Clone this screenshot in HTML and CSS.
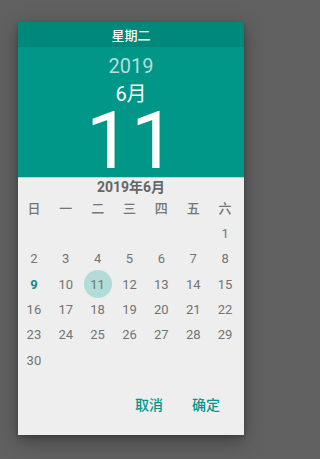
FILE: index.html
```html
<!DOCTYPE html>
<html lang="zh">
<head>
<meta charset="utf-8">
<link rel="stylesheet" href="styles.css">
</head>
<body>
<div class="dialog">
  <div class="weekday-bar">星期二</div>
  <div class="header">
    <div class="year">2019</div>
    <div class="month">6月</div>
    <div class="day">11</div>
  </div>
  <div class="calendar">
    <div class="month-title">2019年6月</div>
    <div class="weekdays">
      <span>日</span><span>一</span><span>二</span><span>三</span><span>四</span><span>五</span><span>六</span>
    </div>
    <div class="days">
      <span></span><span></span><span></span><span></span><span></span><span></span><span>1</span>
      <span>2</span><span>3</span><span>4</span><span>5</span><span>6</span><span>7</span><span>8</span>
      <span class="today">9</span><span>10</span><span class="selected"><b>11</b></span><span>12</span><span>13</span><span>14</span><span>15</span>
      <span>16</span><span>17</span><span>18</span><span>19</span><span>20</span><span>21</span><span>22</span>
      <span>23</span><span>24</span><span>25</span><span>26</span><span>27</span><span>28</span><span>29</span>
      <span>30</span>
    </div>
    <div class="actions">
      <span class="btn">取消</span>
      <span class="btn">确定</span>
    </div>
  </div>
</div>
</body>
</html>
```
FILE: styles.css
```css
html, body {
  margin: 0;
  padding: 0;
  background: #616161;
  font-family: Roboto, "Noto Sans CJK SC", sans-serif;
}
body {
  width: 262px;
  height: 459px;
  overflow: hidden;
}
.dialog {
  margin: 22px 0 0 18px;
  width: 226px;
  height: 413px;
  background: #eeeeee;
  box-shadow: 0 6px 18px rgba(0, 0, 0, 0.35), 0 2px 4px rgba(0, 0, 0, 0.2);
  display: flex;
  flex-direction: column;
}
.weekday-bar {
  height: 25px;
  background: #00897b;
  color: #ffffff;
  font-size: 13px;
  font-weight: 500;
  line-height: 27px;
  text-align: center;
}
.header {
  background: #009688;
  height: 130px;
  border-bottom: 1px solid #a9d7d2;
  display: flex;
  flex-direction: column;
  align-items: center;
}
.year {
  margin-top: 9px;
  height: 21px;
  line-height: 21px;
  font-size: 20px;
  color: #b2dfdb;
}
.month {
  margin-top: 6px;
  height: 22px;
  line-height: 22px;
  font-size: 20px;
  font-weight: 400;
  color: #ffffff;
}
.day {
  margin-top: 4px;
  height: 64px;
  line-height: 64px;
  font-size: 80px;
  font-weight: 400;
  color: #ffffff;
}
.calendar {
  flex: 1;
  display: flex;
  flex-direction: column;
}
.month-title {
  height: 19px;
  line-height: 19px;
  text-align: center;
  font-size: 14px;
  font-weight: 700;
  color: #666666;
}
.weekdays {
  display: grid;
  grid-template-columns: repeat(7, 1fr);
  padding-right: 3px;
  height: 24px;
  line-height: 24px;
  font-size: 13px;
  font-weight: 500;
  color: #757575;
  text-align: center;
}
.days {
  display: grid;
  grid-template-columns: repeat(7, 1fr);
  grid-auto-rows: 25.3px;
  padding-right: 3px;
  font-size: 13px;
  color: #737373;
}
.days span {
  display: flex;
  align-items: center;
  justify-content: center;
}
.days .today {
  color: #009688;
  font-weight: 700;
}
.days .selected b {
  flex: none;
  width: 28px;
  height: 28px;
  border-radius: 50%;
  background: #b2dcd7;
  font-weight: 400;
  display: flex;
  align-items: center;
  justify-content: center;
}
.actions {
  display: flex;
  justify-content: flex-end;
  gap: 29px;
  padding: 22px 24px 0 0;
  line-height: 20px;
}
.btn {
  font-size: 14px;
  font-weight: 500;
  color: #009688;
}
```
